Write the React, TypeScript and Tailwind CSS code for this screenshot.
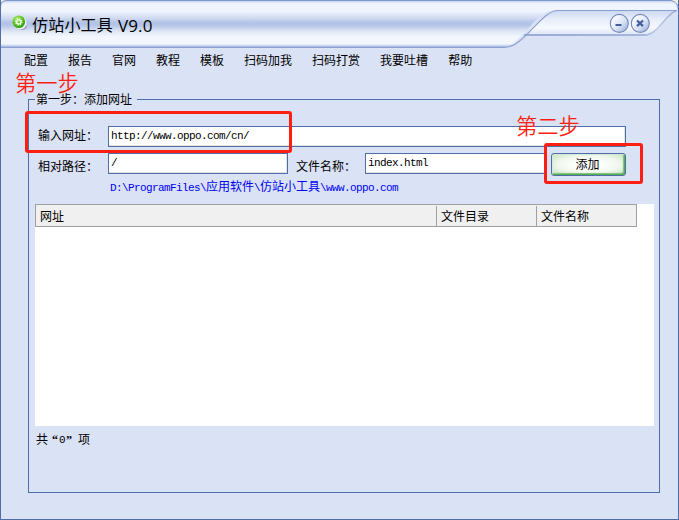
import React from "react";

const menus = ["配置", "报告", "官网", "教程", "模板", "扫码加我", "扫码打赏", "我要吐槽", "帮助"];
const cjk = "font-['Liberation_Sans','Noto_Sans_CJK_SC',sans-serif]";
const mono = "font-['Liberation_Mono','Noto_Sans_CJK_SC',monospace]";

function TitleArt() {
  return (
    <svg className="absolute left-0 top-0" width="679" height="50" viewBox="0 0 679 50">
      <defs>
        <linearGradient id="bar" x1="0" y1="0" x2="0" y2="1">
          <stop offset="0" stopColor="#c9d6f0" />
          <stop offset=".06" stopColor="#f0f4fc" />
          <stop offset=".22" stopColor="#f0f4fc" />
          <stop offset=".36" stopColor="#d3ddf2" />
          <stop offset=".47" stopColor="#b3c3e7" />
          <stop offset=".53" stopColor="#b5c5e8" />
          <stop offset=".66" stopColor="#dee6f6" />
          <stop offset=".78" stopColor="#f3f7fd" />
          <stop offset=".93" stopColor="#f3f7fd" />
          <stop offset="1" stopColor="#aebfe2" />
        </linearGradient>
        <linearGradient id="tab" x1="0" y1="0" x2="0" y2="1">
          <stop offset="0" stopColor="#ccd9f2" />
          <stop offset=".35" stopColor="#e6edfa" />
          <stop offset=".7" stopColor="#f6f9fe" />
          <stop offset="1" stopColor="#dce5f6" />
        </linearGradient>
        <linearGradient id="edge" x1="520" y1="0" x2="679" y2="0" gradientUnits="userSpaceOnUse">
          <stop offset="0" stopColor="#8398cc" />
          <stop offset=".78" stopColor="#94a7d5" />
          <stop offset=".86" stopColor="#bdcaea" />
          <stop offset="1" stopColor="#90a5d2" />
        </linearGradient>
      </defs>
      <path d="M0 0H679V11H0Z" fill="#f5f0dc" />
      <path d="M0 50V6Q0 0 6 0H672Q679 2 679 10V50Z" fill="#dae2f5" />
      <path d="M1 47V6Q1 1 6 1H671Q678 2 677 10H556C541 10 531 27 520 37Q511 47 505 47Z" fill="url(#bar)" />
      <path d="M525 35C535 26 545 10.5 558 10.5H677C667 12 655 35 645 35Z" fill="url(#tab)" />
      <path d="M677 10.5C667 12 658 35 645 35H524" fill="none" stroke="url(#edge)" strokeWidth="1.3" />
      <path d="M1 47.3H505C524 47.3 541 10.5 558 10.5H677" fill="none" stroke="#8ba0d0" strokeWidth="1.2" />
      <path d="M.5 50V7Q.5 .5 7 .5H671Q678.5 2 678.5 11V50" fill="none" stroke="#7f98cb" />
      <path d="M.5 14V50M678.5 12V50" fill="none" stroke="#4f6ea8" />
    </svg>
  );
}

function AppIcon() {
  return (
    <svg width="16" height="17" viewBox="0 0 16 17" className="shrink-0">
      <defs>
        <radialGradient id="green" cx=".38" cy=".28" r=".8">
          <stop offset="0" stopColor="#b9ee79" />
          <stop offset=".5" stopColor="#5cc524" />
          <stop offset="1" stopColor="#239411" />
        </radialGradient>
      </defs>
      <ellipse cx="9.5" cy="12" rx="5.5" ry="3" fill="#8f959d" opacity=".75" />
      <circle cx="8" cy="7.8" r="6.6" fill="#edf2ee" />
      <circle cx="6.8" cy="6.8" r="6.3" fill="url(#green)" />
      <circle cx="6.8" cy="6.9" r="2.1" fill="none" stroke="#f3ffec" strokeWidth="1.3" />
      <circle cx="6.8" cy="6.9" r="3.2" fill="none" stroke="#f3ffec" strokeWidth="1.1" strokeDasharray="1.25 1.26" />
    </svg>
  );
}

function WindowButton({ close = false }: { close?: boolean }) {
  return (
    <svg width="21" height="21" viewBox="0 0 21 21">
      <defs>
        <linearGradient id={close ? "orb2" : "orb1"} x1="0" y1="0" x2="1" y2="1">
          <stop offset=".15" stopColor="#fdfeff" />
          <stop offset=".55" stopColor="#dce5f6" />
          <stop offset="1" stopColor="#8fa6d5" />
        </linearGradient>
      </defs>
      <circle cx="10.3" cy="10.4" r="9" fill={close ? "url(#orb2)" : "url(#orb1)"} stroke="#7289bd" strokeWidth="1.1" />
      {close ? (
        <path d="M7 7.5L13 13.2M13 7.5L7 13.2" stroke="#43609d" strokeWidth="2.3" />
      ) : (
        <path d="M6.5 12H12.5" stroke="#43609d" strokeWidth="2" />
      )}
    </svg>
  );
}

function Field({ value, className }: { value: string; className: string }) {
  return (
    <div className={`h-[21px] shrink-0 border border-[#4f6ea8] bg-white pl-0.5 text-[11px] leading-[18px] tracking-[-0.6px] text-black shadow-[inset_-1px_-1px_0_#e3e3e3] ${mono} ${className}`}>
      {value}
    </div>
  );
}

function Label({ children, className = "" }: { children: React.ReactNode; className?: string }) {
  return <span className={`shrink-0 whitespace-nowrap text-xs leading-[21px] ${className}`}>{children}</span>;
}

export default function App() {
  return (
    <main className={`relative flex h-[520px] w-[679px] flex-col overflow-hidden border border-t-0 border-[#4f6ea8] bg-[#dae2f5] text-black ${cjk}`}>
      <header className="relative -mx-px h-12 shrink-0">
        <TitleArt />
        <div className="relative flex h-12 pl-3">
          <div className="pt-[15px]"><AppIcon /></div>
          <h1 className="ml-1 mt-[14px] flex whitespace-nowrap text-[16px] leading-6">
            <span className="tracking-[0.2px]">仿站小工具</span>
            <span className="ml-[5px] text-[17px] tracking-[0.1px] font-['Open_Sans',sans-serif]">V9.0</span>
          </h1>
          <div className="ml-auto mr-[28px] mt-[13px] flex h-[21px]">
            <WindowButton />
            <WindowButton close />
          </div>
        </div>
      </header>

      <nav className="flex h-[26px] shrink-0 gap-5 pl-[23px] text-xs leading-[27px]">
        {menus.map((menu) => <span key={menu}>{menu}</span>)}
      </nav>

      <fieldset className="ml-[27px] mt-[17px] flex h-[402px] w-[632px] min-w-0 shrink-0 flex-col border border-[#4f6ea8]">
        <legend className="ml-1.5 h-[17px] w-[102px] whitespace-nowrap pl-px text-xs leading-[18px]">第一步：添加网址</legend>
        <div className="mt-[18px] flex pl-[9px]">
          <Label className="w-[70px]">输入网址：</Label>
          <Field value="http://www.oppo.com/cn/" className="w-[518px]" />
        </div>
        <div className="mt-1.5 flex h-[23px] pl-[9px]">
          <Label className="w-[70px] pt-1">相对路径：</Label>
          <Field value="/" className="w-[180px]" />
          <Label className="ml-2 w-[69px] pt-1">文件名称：</Label>
          <Field value="index.html" className="w-[181px]" />
          <button className="ml-[5px] h-[23px] w-[75px] shrink-0 rounded-[3px] border border-[#4f6ea8] bg-[radial-gradient(ellipse_at_center,#fff_20%,#f1f8ef_58%,#c2e2bd_100%)] pr-0.5 text-xs leading-5 shadow-[inset_1px_1px_1px_#d5ead6,inset_-1px_-1px_1px_#4eaa4e,inset_-2px_-2px_1px_#82c57f]">添加</button>
        </div>
        <p className={`ml-[81px] mt-0.5 h-[18px] whitespace-nowrap text-xs leading-[20px] text-[#0000f5] ${mono}`}>
          <span className="text-[11px] tracking-[-0.6px]">D:\ProgramFiles\</span>应用软件<span className="text-[11px] tracking-[-0.6px]">\</span>仿站小工具<span className="text-[11px] tracking-[-0.6px]">\www.oppo.com</span>
        </p>
        <section className="ml-1.5 mt-2 h-[222px] w-[619px] shrink-0 bg-white">
          <div className="flex h-[23px] w-[602px] border border-[#a0a0a0] bg-[#f0f0f0] text-xs">
            <div className="my-px h-5 w-[401px] border-r border-[#a0a0a0] pl-1 leading-[22px]">网址</div>
            <div className="my-px h-5 w-[100px] border-r border-[#a0a0a0] pl-1 leading-[22px]">文件目录</div>
            <div className="my-px pl-1 leading-[22px]">文件名称</div>
          </div>
        </section>
        <p className="ml-[7px] mt-[5px] flex text-xs leading-[18px]">
          <span>共</span><span className="ml-1 w-[6px] text-center font-['Liberation_Serif'] font-bold">“</span>
          <span className={`ml-px w-[6px] text-[11px] ${mono}`}>0</span>
          <span className="ml-px w-[6px] text-center font-['Liberation_Serif'] font-bold">”</span><span className="ml-[6px]">项</span>
        </p>
      </fieldset>

      <div className="absolute left-[24px] top-[111px] h-[42px] w-[267px] rounded-[3px] border-[3px] border-[#ff1e12]" />
      <div className="absolute left-[543px] top-[143px] h-[41px] w-[99px] rounded-[3px] border-[3px] border-[#ff1e12]" />
      <span className="absolute left-[14px] top-[70px] whitespace-nowrap text-[21.3px] font-[350] leading-7 text-[#ff1e12]">第一步</span>
      <span className="absolute left-[515px] top-[113px] whitespace-nowrap text-[21.3px] font-[350] leading-7 text-[#ff1e12]">第二步</span>
    </main>
  );
}
